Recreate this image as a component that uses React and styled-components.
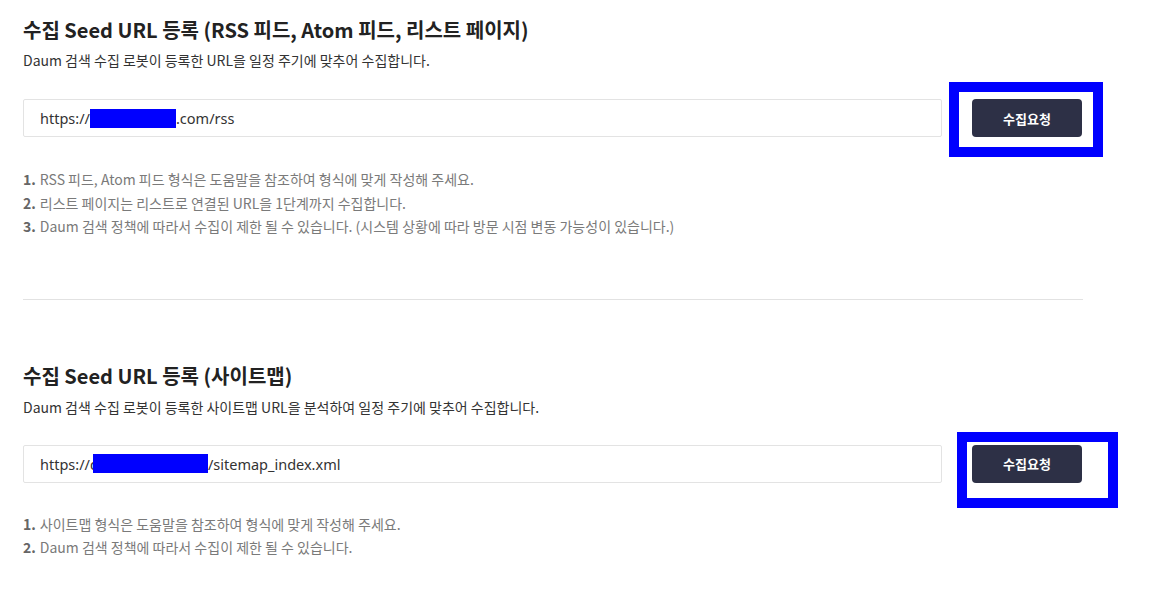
import React from "react";
import styled, { createGlobalStyle } from "styled-components";

const GlobalStyle = createGlobalStyle`
  html, body {
    margin: 0;
    padding: 0;
    background: #fff;
  }
  body {
    font-family: "Noto Sans CJK KR", "Noto Sans", sans-serif;
    color: #333;
  }
`;

const Page = styled.div`
  width: 1060px;
  padding: 0 0 0 23px;
`;

const Section = styled.section`
  padding-top: ${(p) => p.$top}px;
`;

const Title = styled.h2`
  margin: 0;
  font-size: 20px;
  line-height: 28px;
  font-weight: 700;
  color: #222;
`;

const Desc = styled.p`
  margin: ${(p) => p.$gap}px 0 0;
  font-size: 14px;
  line-height: 20px;
  color: #333;
`;

const FormRow = styled.div`
  display: flex;
  align-items: flex-start;
  gap: 30px;
  margin-top: ${(p) => p.$gap}px;
`;

const UrlBox = styled.div`
  box-sizing: border-box;
  width: 919px;
  height: 38px;
  border: 1px solid #e3e3e3;
  border-radius: 2px;
  padding: 0 16px;
  display: flex;
  align-items: center;
  font-family: "Noto Sans", sans-serif;
  font-size: 14.5px;
  color: #333;
  white-space: nowrap;
`;

const Redact = styled.span`
  display: inline-block;
  width: ${(p) => p.$w}px;
  height: 19px;
  margin-left: ${(p) => p.$ml || 0}px;
  background: #0000ff;
  vertical-align: middle;
`;

const ButtonWrap = styled.div`
  position: relative;
`;

const Button = styled.button`
  width: 110px;
  height: 38px;
  border: 0;
  border-radius: 4px;
  background: #2d3046;
  color: #fff;
  font-family: "Noto Sans CJK KR", sans-serif;
  font-size: 13px;
  font-weight: 700;
  cursor: pointer;
`;

const Highlight = styled.div`
  position: absolute;
  left: ${(p) => p.$x}px;
  top: ${(p) => p.$y}px;
  width: ${(p) => p.$w}px;
  height: ${(p) => p.$h}px;
  box-sizing: border-box;
  border: 10px solid #0000ff;
  pointer-events: none;
`;

const Notes = styled.ol`
  list-style: none;
  margin: ${(p) => p.$gap}px 0 0;
  padding: 0;
`;

const Note = styled.li`
  font-size: 14px;
  line-height: 23.5px;
  color: #7a7a7a;
`;

const Num = styled.b`
  font-weight: 700;
  color: #666;
  margin-right: 4px;
`;

const Divider = styled.hr`
  margin: 60px 0 0;
  border: 0;
  border-top: 1px solid #e2e2e2;
  width: 1060px;
`;

export default function App() {
  return (
    <>
      <GlobalStyle />
      <Page>
        <Section $top={16}>
          <Title>수집 Seed URL 등록 (RSS 피드, Atom 피드, 리스트 페이지)</Title>
          <Desc $gap={6}>
            Daum 검색 수집 로봇이 등록한 URL을 일정 주기에 맞추어 수집합니다.
          </Desc>
          <FormRow $gap={29}>
            <UrlBox>
              https://<Redact $w={86} />.com/rss
            </UrlBox>
            <ButtonWrap>
              <Button>수집요청</Button>
              <Highlight $x={-23} $y={-17} $w={154} $h={75} />
            </ButtonWrap>
          </FormRow>
          <Notes $gap={31}>
            <Note>
              <Num>1.</Num>RSS 피드, Atom 피드 형식은 도움말을 참조하여 형식에 맞게 작성해 주세요.
            </Note>
            <Note>
              <Num>2.</Num>리스트 페이지는 리스트로 연결된 URL을 1단계까지 수집합니다.
            </Note>
            <Note>
              <Num>3.</Num>Daum 검색 정책에 따라서 수집이 제한 될 수 있습니다. (시스템 상황에 따라 방문 시점 변동 가능성이 있습니다.)
            </Note>
          </Notes>
        </Section>
        <Divider />
        <Section $top={62}>
          <Title>수집 Seed URL 등록 (사이트맵)</Title>
          <Desc $gap={7}>
            Daum 검색 수집 로봇이 등록한 사이트맵 URL을 분석하여 일정 주기에 맞추어 수집합니다.
          </Desc>
          <FormRow $gap={28}>
            <UrlBox>
              https://d<Redact $w={115} $ml={-6} />/sitemap_index.xml
            </UrlBox>
            <ButtonWrap>
              <Button>수집요청</Button>
              <Highlight $x={-15} $y={-13} $w={161} $h={76} />
            </ButtonWrap>
          </FormRow>
          <Notes $gap={30}>
            <Note>
              <Num>1.</Num>사이트맵 형식은 도움말을 참조하여 형식에 맞게 작성해 주세요.
            </Note>
            <Note>
              <Num>2.</Num>Daum 검색 정책에 따라서 수집이 제한 될 수 있습니다.
            </Note>
          </Notes>
        </Section>
      </Page>
    </>
  );
}
